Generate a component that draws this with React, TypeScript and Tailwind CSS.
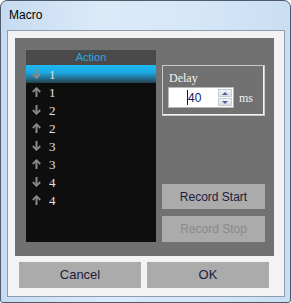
import React from "react";

const Arrow = ({ up }: { up?: boolean }) => (
  <svg width="9" height="10" viewBox="0 0 9 10" className={up ? "rotate-180" : ""}>
    <line x1="4.5" y1="0" x2="4.5" y2="9" stroke="#8a8a8a" strokeWidth="2" />
    <polyline points="0.8,5 4.5,8.8 8.2,5" fill="none" stroke="#8a8a8a" strokeWidth="1.8" />
  </svg>
);

const rows: { up: boolean; n: number }[] = [
  { up: false, n: 1 },
  { up: true, n: 1 },
  { up: false, n: 2 },
  { up: true, n: 2 },
  { up: false, n: 3 },
  { up: true, n: 3 },
  { up: false, n: 4 },
  { up: true, n: 4 },
];

export default function App() {
  return (
    <div className="w-[291px] h-[303px] rounded-t-[7px] rounded-b-[3px] border border-[#4f5b6a] bg-[linear-gradient(90deg,#c6dbf1,#dbeaf9_35%,#d6e7f8_65%,#cadef3)] flex flex-col pl-[6px] pr-[5px] pb-[5px] font-['Liberation_Sans',Arial,sans-serif]">
      <div className="h-[29px] flex items-center pl-[2px] pb-[1px] text-[12px] text-black">Macro</div>
      <div className="flex-1 border border-[#8d9cae] bg-[#f3f3f3] flex flex-col pl-[7px] pt-[7px]">
        <div className="w-[259px] h-[218px] bg-[#717171] flex pl-[11px] pt-[12px]">
          <div className="w-[130px] h-[192px] bg-[#0e0e0e] flex flex-col">
            <div className="h-[15px] bg-[#4a4a4a] flex items-center justify-center text-[11px] text-[#29a9e2]">Action</div>
            {rows.map((r, i) => (
              <div
                key={i}
                className={
                  "h-[18px] flex items-center pl-[6px] " +
                  (i === 0
                    ? "bg-[linear-gradient(180deg,#1db7f0_0%,#1babe4_40%,#22789e_70%,#263f4c_100%)]"
                    : "")
                }
              >
                <Arrow up={r.up} />
                <span className="ml-[8px] text-[13px] leading-none text-[#e2e2e2] font-['Liberation_Serif',serif]">{r.n}</span>
              </div>
            ))}
          </div>
          <div className="ml-[6px] w-[103px] flex flex-col">
            <div className="mt-[15px] h-[51px] border border-[#c9c9c9] shadow-[inset_-1px_-1px_0_#f4f4f4] pl-[5px] pt-[5px] font-['Liberation_Serif',serif] text-[12px] text-[#f2f2f2]">
              <div className="leading-[14px] pl-[1px]">Delay</div>
              <div className="mt-[2px] flex items-center">
                <div className="w-[66px] h-[21px] bg-white border border-[#b8b8b8] flex items-center">
                  <div className="flex-1 flex items-center pl-[18px] h-full">
                    <div className="w-[1px] h-[15px] bg-[#10103a]" />
                    <span className="text-[12px] text-[#15205a] font-['Liberation_Sans',Arial,sans-serif] leading-none">40</span>
                  </div>
                  <div className="w-[15px] h-full flex flex-col justify-center gap-[1px] pr-[1px]">
                    <div className="h-[8px] bg-[linear-gradient(180deg,#f2f4f8,#d9dee8)] border border-[#c3c9d6] flex items-center justify-center">
                      <div className="w-0 h-0 border-l-[3px] border-r-[3px] border-b-[3px] border-l-transparent border-r-transparent border-b-[#4e5f90]" />
                    </div>
                    <div className="h-[8px] bg-[linear-gradient(180deg,#f2f4f8,#d9dee8)] border border-[#c3c9d6] flex items-center justify-center">
                      <div className="w-0 h-0 border-l-[3px] border-r-[3px] border-t-[3px] border-l-transparent border-r-transparent border-t-[#4e5f90]" />
                    </div>
                  </div>
                </div>
                <span className="ml-[5px]">ms</span>
              </div>
            </div>
            <div className="mt-[68px] h-[25px] bg-[#ababab] flex items-center justify-center text-[12px] text-[#1c1c3c]">Record Start</div>
            <div className="mt-[7px] h-[26px] bg-[#ababab] flex items-center justify-center text-[12px] text-[#8a8a8a]">Record Stop</div>
          </div>
        </div>
        <div className="mt-[6px] ml-[4px] flex gap-[6px]">
          <div className="w-[122px] h-[26px] bg-[#ababab] flex items-center justify-center text-[13px] text-[#1c1c3c]">Cancel</div>
          <div className="w-[122px] h-[26px] bg-[#ababab] flex items-center justify-center text-[13px] text-[#1c1c3c]">OK</div>
        </div>
      </div>
    </div>
  );
}
